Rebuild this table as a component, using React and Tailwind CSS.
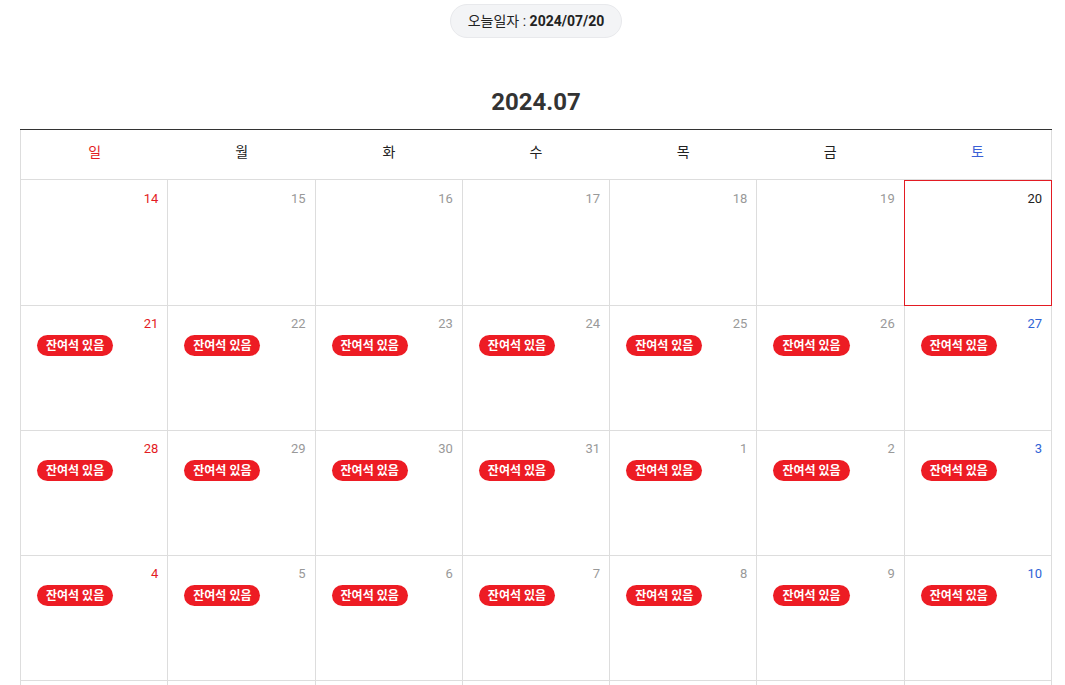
import React from "react";

const weeks = [
  [14, 15, 16, 17, 18, 19, 20],
  [21, 22, 23, 24, 25, 26, 27],
  [28, 29, 30, 31, 1, 2, 3],
  [4, 5, 6, 7, 8, 9, 10],
  [11, 12, 13, 14, 15, 16, 17],
];
const days = ["일", "월", "화", "수", "목", "금", "토"];

function headColor(i) {
  if (i === 0) return "text-[#e31b23]";
  if (i === 6) return "text-[#3b5fd6]";
  return "text-[#222]";
}
function numColor(i, today) {
  if (today) return "text-[#222]";
  if (i === 0) return "text-[#e31b23]";
  if (i === 6) return "text-[#2f64d6]";
  return "text-[#999]";
}

export default function App() {
  return (
    <div
      className="w-[1072px] bg-white"
      style={{ fontFamily: 'Roboto, "Noto Sans CJK KR", sans-serif' }}
    >
      <div className="flex justify-center pt-1">
        <div className="h-[34px] px-[17px] flex items-center rounded-full bg-[#f3f4f6] border border-[#e8e9ec] text-[14px] text-[#222]">
          <span>오늘일자 :&nbsp;</span>
          <span className="font-bold">2024/07/20</span>
        </div>
      </div>
      <div className="text-center text-[24px] leading-[28px] font-bold text-[#333] mt-[50px] mb-[13px]">
        2024.07
      </div>
      <div className="mx-[20px] border-t border-[#333]">
        <div className="grid grid-cols-7 h-[50px] border-l border-r border-b border-[#ddd]">
          {days.map((d, i) => (
            <div
              key={d}
              className={`flex items-center justify-center text-[14px] pb-[5px] ${headColor(i)}`}
            >
              {d}
            </div>
          ))}
        </div>
        {weeks.map((w, wi) => (
          <div key={wi} className="grid grid-cols-7 border-l border-[#ddd]">
            {w.map((n, i) => {
              const today = wi === 0 && i === 6;
              return (
                <div
                  key={i}
                  className={`relative border-r border-b border-[#ddd] pr-[9px] ${
                    wi === 0 ? "h-[126px] pt-[9px]" : "h-[125px] pt-[8px]"
                  }`}
                >
                  {today && (
                    <div className="absolute -left-px top-0 right-[-1px] bottom-[-1px] border border-[#e31b23]" />
                  )}
                  <div className={`text-right text-[13px] leading-[20px] ${numColor(i, today)}`}>
                    {n}
                  </div>
                  {wi > 0 && (
                    <div className="ml-[16px] mt-px flex w-fit items-center h-[21px] px-[9px] rounded-full bg-[#ed1c24] text-white text-[12px] font-bold whitespace-nowrap">
                      잔여석 있음
                    </div>
                  )}
                </div>
              );
            })}
          </div>
        ))}
      </div>
    </div>
  );
}
